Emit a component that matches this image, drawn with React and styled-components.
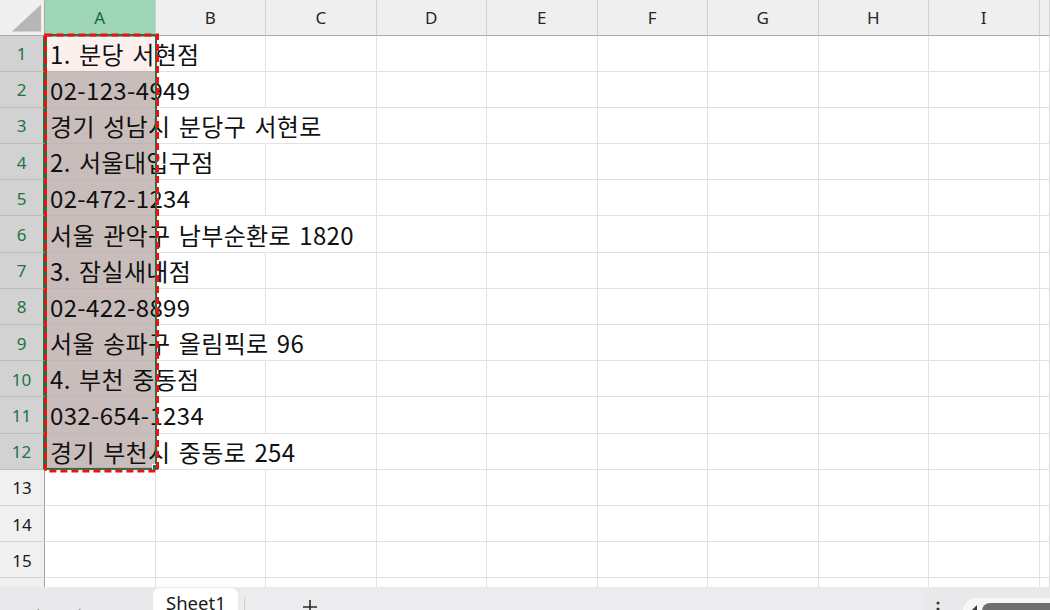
import React from 'react';
import styled, { createGlobalStyle } from 'styled-components';

const GlobalStyle = createGlobalStyle`
  html, body { margin: 0; padding: 0; background: #ffffff; overflow: hidden; }
  * { box-sizing: border-box; }
`;

const COLS = ['A', 'B', 'C', 'D', 'E', 'F', 'G', 'H', 'I'];
const DATA = [
  '1. 분당 서현점',
  '02-123-4949',
  '경기 성남시 분당구 서현로',
  '2. 서울대입구점',
  '02-472-1234',
  '서울 관악구 남부순환로 1820',
  '3. 잠실새내점',
  '02-422-8899',
  '서울 송파구 올림픽로 96',
  '4. 부천 중동점',
  '032-654-1234',
  '경기 부천시 중동로 254',
];
const LONG_ROWS = [2, 5, 8, 11];
const ROW_COUNT = 16;

const Window = styled.div`
  width: 1050px;
  height: 610px;
  display: flex;
  flex-direction: column;
  overflow: hidden;
  background: #ffffff;
`;

const GridWrap = styled.div`
  position: relative;
  height: 587px;
  flex: none;
  overflow: hidden;
`;

const Grid = styled.div`
  display: grid;
  grid-template-columns: 45px repeat(9, 110.5px) 1fr;
  grid-template-rows: 35.5px;
  grid-auto-rows: 36.2px;
`;

const Corner = styled.div`
  background: #efefef;
  border-right: 1px solid #a9a9a9;
  border-bottom: 1px solid #a9a9a9;
  display: flex;
  align-items: flex-end;
  justify-content: flex-end;
  padding: 0 3px 3px 0;
`;

const Triangle = styled.div`
  width: 29px;
  height: 27px;
  background: #b6b6b6;
  clip-path: polygon(100% 0, 100% 100%, 0 100%);
`;

const ColHead = styled.div`
  background: ${p => (p.$active ? '#9fd5b7' : '#efefef')};
  color: ${p => (p.$active ? '#0f6b35' : '#262626')};
  border-right: 1px solid #d2d2d2;
  border-bottom: ${p => (p.$active ? '2px solid #217346' : '1px solid #a9a9a9')};
  display: flex;
  align-items: center;
  justify-content: center;
  font-family: 'Noto Sans', 'Open Sans', sans-serif;
  font-size: 17px;
  padding-top: 1px;
`;

const RowHead = styled.div`
  background: ${p => (p.$active ? '#d2d2d2' : '#f0f0f0')};
  color: ${p => (p.$active ? '#217346' : '#1a1a1a')};
  border-right: ${p => (p.$active ? '2px solid #217346' : '1px solid #a0a0a0')};
  border-bottom: 1px solid ${p => (p.$active ? '#bcbcbc' : '#d4d4d4')};
  display: flex;
  align-items: center;
  justify-content: center;
  font-family: 'Noto Sans', 'Open Sans', sans-serif;
  font-size: 17px;
  padding-top: 1px;
`;

const Cell = styled.div`
  position: relative;
  z-index: ${p => (p.$text ? 1 : 0)};
  background: ${p => p.$bg || 'transparent'};
  border-right: 1px solid ${p => (p.$noRight ? 'transparent' : '#e1e1e1')};
  border-bottom: 1px solid ${p => (p.$selBottom ? '#c2b5b3' : '#e1e1e1')};
  display: flex;
  align-items: center;
  padding: 0 0 0 5px;
  white-space: nowrap;
  overflow: visible;
  font-family: 'Noto Sans CJK KR', 'Noto Sans', sans-serif;
  font-size: 24px;
  letter-spacing: 0.35px;
  word-spacing: 2.6px;
  color: #111111;
`;

const Overlay = styled.svg`
  position: absolute;
  left: 0;
  top: 0;
  z-index: 5;
  pointer-events: none;
`;

const TabBar = styled.div`
  flex: none;
  height: 40px;
  background: #e9e9eb;
  display: flex;
  align-items: flex-start;
  padding-top: 1px;
`;

const NavArea = styled.div`
  width: 153px;
  height: 100%;
  display: flex;
  align-items: center;
  padding-left: 30px;
  gap: 30px;
  color: #a3a3a3;
  padding-top: 14px;
`;

const SheetTab = styled.div`
  width: 85px;
  height: 36px;
  background: #ffffff;
  border-radius: 7px 7px 0 0;
  font-family: 'Noto Sans', 'Open Sans', sans-serif;
  font-size: 18.5px;
  color: #1a1a1a;
  padding: 2px 0 0 13px;
`;

const TabStrip = styled.div`
  margin-left: 2px;
  width: 684px;
  height: 36px;
  background: #ececee;
  border-radius: 7px 0 0 0;
  display: flex;
  align-items: flex-start;
`;

const Sep = styled.div`
  width: 1px;
  height: 20px;
  background: #cfcfcf;
  margin: 9px 0 0 4px;
`;

const PlusBtn = styled.div`
  margin: 11px 0 0 57px;
  color: #2a2a2a;
`;

const MoreDots = styled.div`
  margin: 13px 0 0 0;
  width: 28px;
  display: flex;
  justify-content: center;
  color: #333;
`;

const ScrollTrack = styled.div`
  margin: 10px 0 0 11px;
  flex: 1;
  height: 26px;
  background: #f7f7f7;
  border-radius: 13px 0 0 13px;
  display: flex;
  align-items: center;
  padding-left: 7px;
  gap: 4px;
`;

const ScrollThumb = styled.div`
  flex: 1;
  height: 16px;
  background: #6f6f6f;
  border-radius: 8px 0 0 8px;
`;

function Chevron({ dir }) {
  return (
    <svg width="14" height="16" viewBox="0 0 14 16" fill="none" stroke="currentColor" strokeWidth="1.4">
      {dir === 'left' ? <path d="M9 2 L4 8 L9 14" /> : <path d="M5 2 L10 8 L5 14" />}
    </svg>
  );
}

export default function App() {
  const rows = [];
  for (let r = 0; r < ROW_COUNT; r++) {
    const active = r < 12;
    rows.push(
      <RowHead key={`rh${r}`} $active={active}>
        {r + 1}
      </RowHead>
    );
    COLS.forEach((c, ci) => {
      let bg;
      let text = null;
      if (ci === 0 && r < 12) {
        bg = r === 0 ? '#fcf0ef' : '#c9bdbb';
        text = DATA[r];
      }
      const noRight = (ci === 0 && r < 12) || (ci === 1 && LONG_ROWS.includes(r));
      rows.push(
        <Cell key={`${c}${r}`} $bg={bg} $text={!!text} $noRight={noRight} $selBottom={ci === 0 && r < 11}>
          {text}
        </Cell>
      );
    });
    rows.push(<Cell key={`x${r}`} />);
  }

  const top = 35;
  const selBottom = 35.5 + 12 * 36.2;

  return (
    <>
      <GlobalStyle />
      <Window>
        <GridWrap>
          <Grid>
            <Corner>
              <Triangle />
            </Corner>
            {COLS.map((c, i) => (
              <ColHead key={c} $active={i === 0}>
                {c}
              </ColHead>
            ))}
            <ColHead />
            {rows}
          </Grid>
          <Overlay width="1050" height="587">
            <rect x="46" y={top + 0.5} width="110" height={selBottom - top - 1.5} fill="none" stroke="#217346" strokeWidth="2" />
            <rect x="152.5" y={selBottom - 5.5} width="6" height="6" fill="#217346" stroke="#ffffff" strokeWidth="1" />
            <rect
              x="45.5"
              y={top}
              width="112"
              height={selBottom - top + 1}
              fill="none"
              stroke="#ee1111"
              strokeWidth="3"
              strokeDasharray="7 4"
            />
          </Overlay>
        </GridWrap>
        <TabBar>
          <NavArea>
            <Chevron dir="left" />
            <Chevron dir="right" />
          </NavArea>
          <SheetTab>Sheet1</SheetTab>
          <TabStrip>
            <Sep />
            <PlusBtn>
              <svg width="16" height="16" viewBox="0 0 16 16" stroke="currentColor" strokeWidth="1.6">
                <path d="M8 1 V15 M1 8 H15" />
              </svg>
            </PlusBtn>
          </TabStrip>
          <MoreDots>
            <svg width="4" height="16" viewBox="0 0 4 16" fill="currentColor">
              <circle cx="2" cy="2" r="1.5" />
              <circle cx="2" cy="8" r="1.5" />
              <circle cx="2" cy="14" r="1.5" />
            </svg>
          </MoreDots>
          <ScrollTrack>
            <svg width="8" height="12" viewBox="0 0 8 12" fill="#3c3c3c">
              <path d="M7 0 L1 6 L7 12 Z" />
            </svg>
            <ScrollThumb />
          </ScrollTrack>
        </TabBar>
      </Window>
    </>
  );
}
